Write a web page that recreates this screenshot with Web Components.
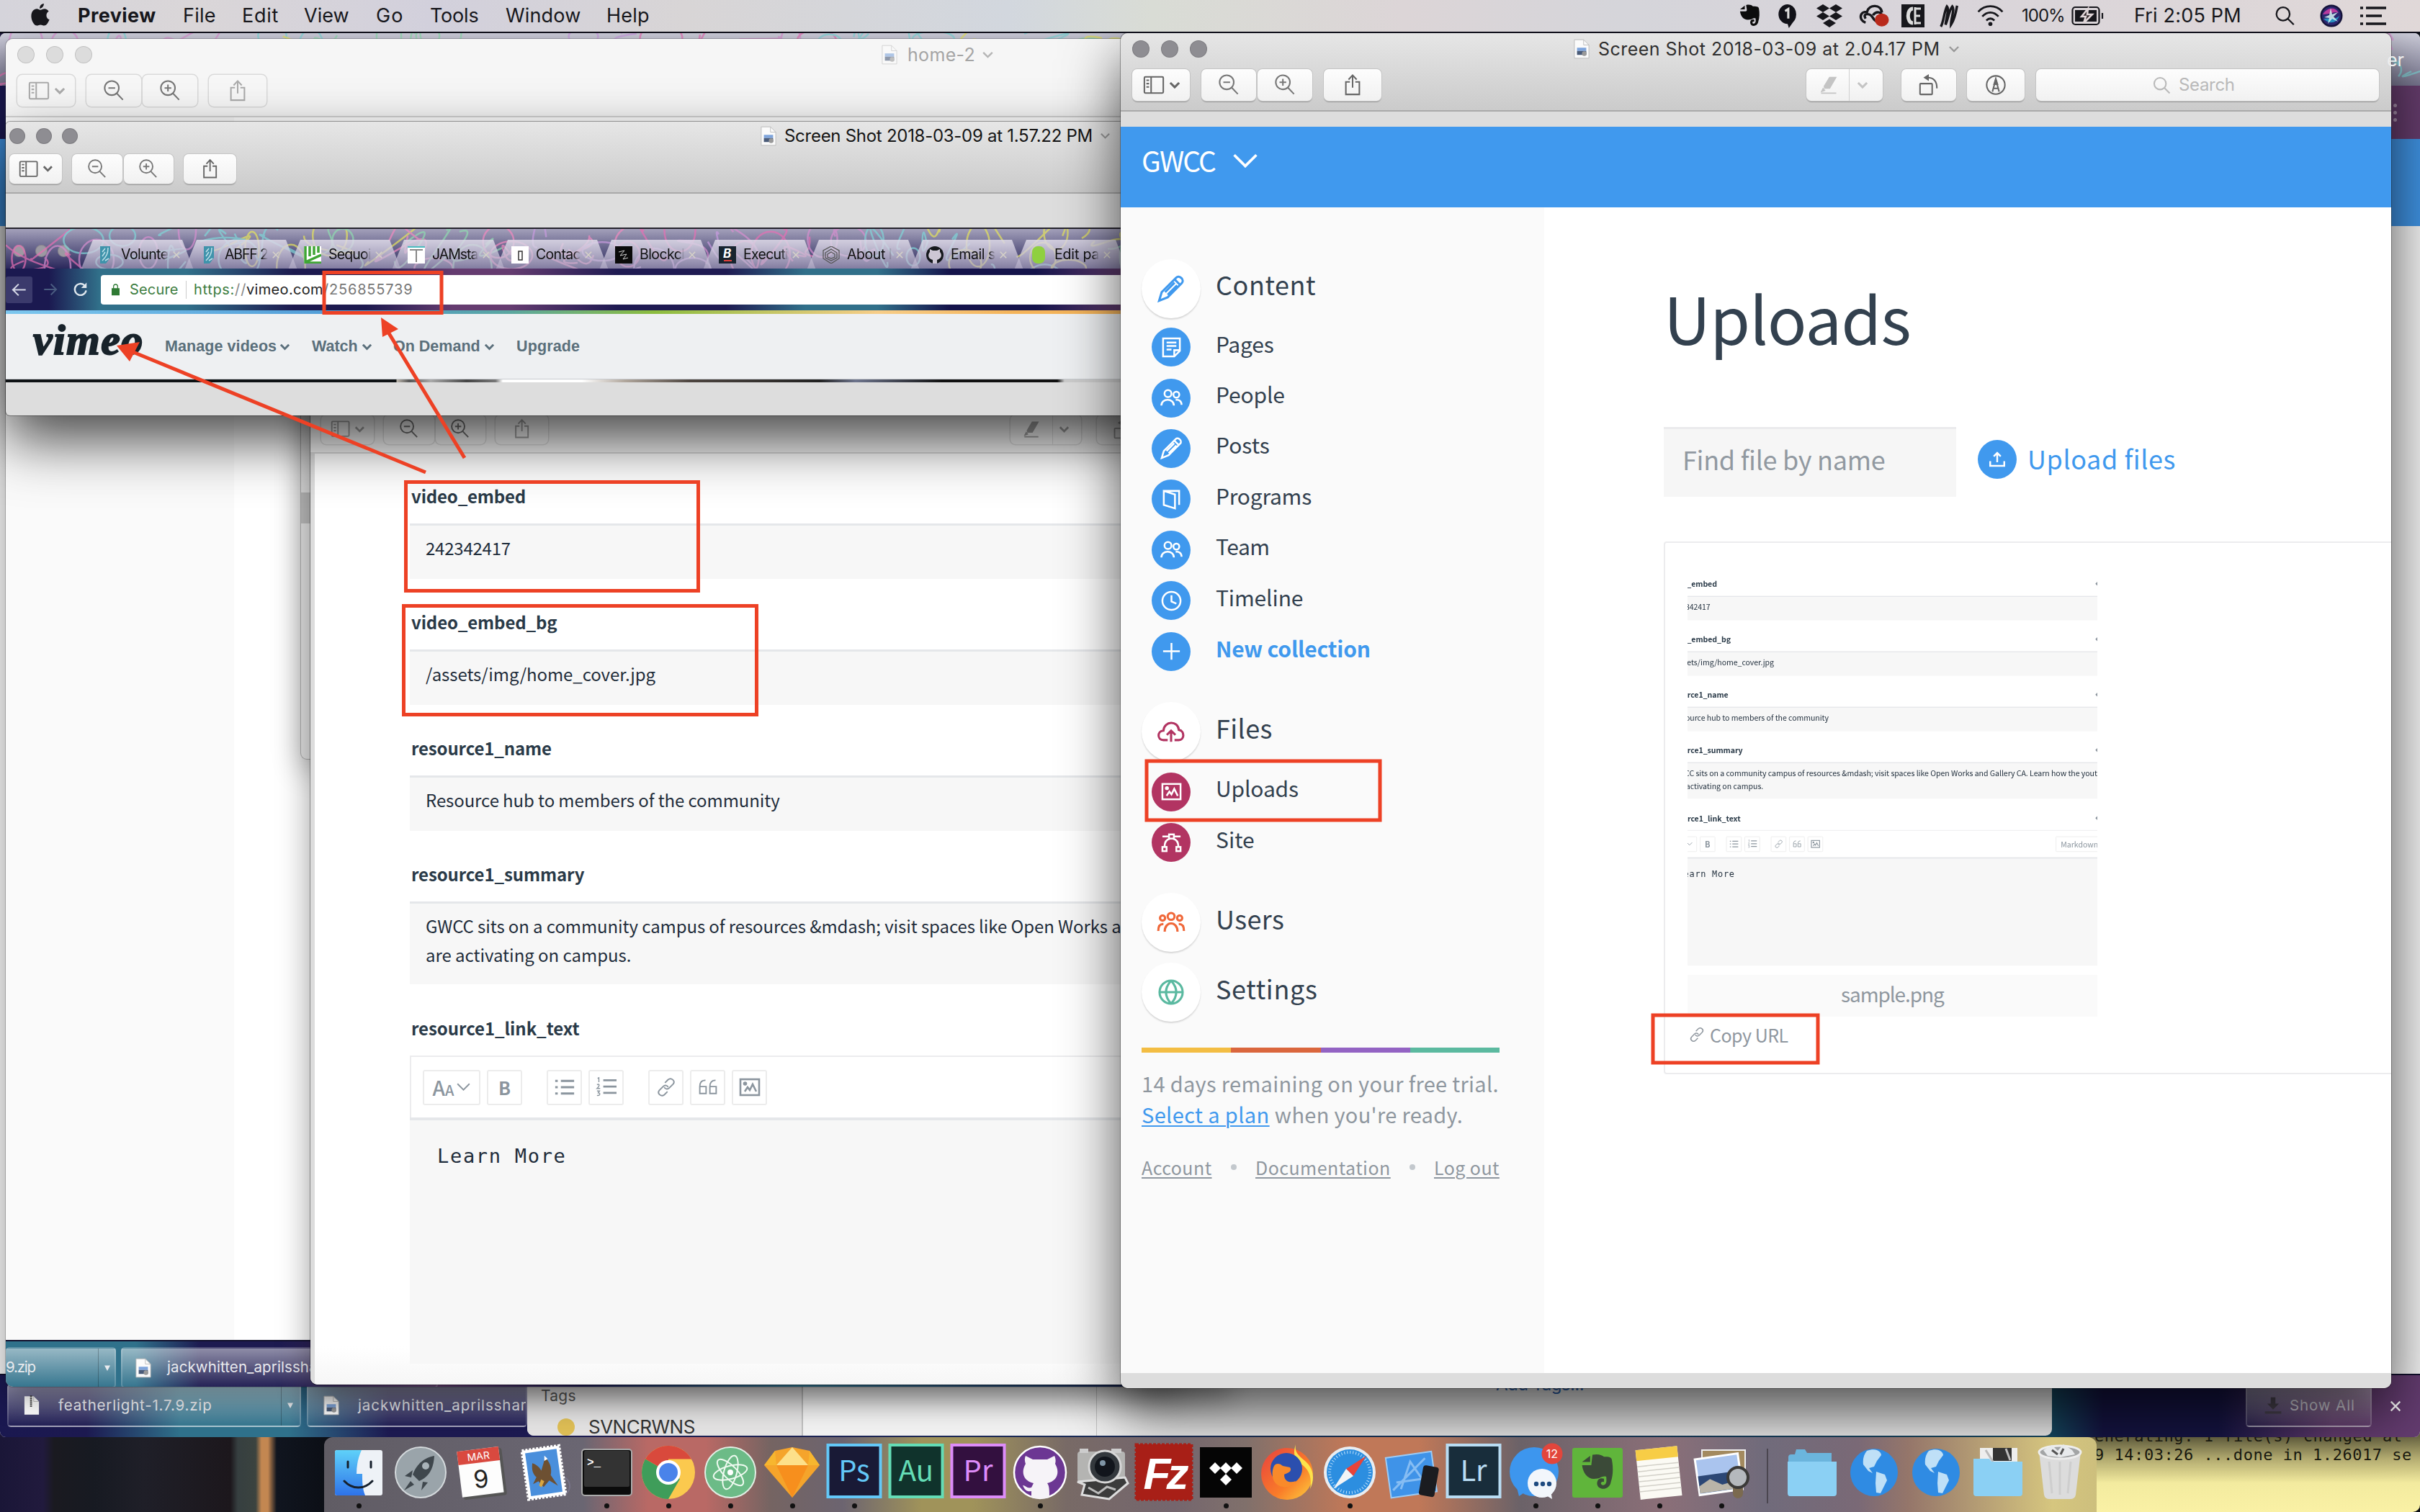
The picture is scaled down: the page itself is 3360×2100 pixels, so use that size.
<!DOCTYPE html>
<html lang="en">
<head>
<meta charset="utf-8">
<title>Desktop</title>
<style>
html,body{margin:0;padding:0;background:#15131c}
body{width:3360px;height:2100px;overflow:hidden;font-family:Inter,"Liberation Sans",sans-serif}
</style>
</head>
<body>
<desk-top></desk-top>
<script>
const ICONS = {
  sidebar:['0 0 32 32','<rect x="2" y="4" width="28" height="24" rx="1.5"/><path d="M12 4v24M5 9h4M5 14h4M5 19h4"/>'],
  chev:['2 1 16 10','<path d="M3 2l7 7 7-7"/>'],
  zoomout:['0 0 32 32','<circle cx="13" cy="12" r="10.500"/><path d="M20.500 20l9 9.500M8 12h10"/>'],
  zoomin:['0 0 32 32','<circle cx="13" cy="12" r="10.500"/><path d="M20.500 20l9 9.500M8 12h10M13 7v10"/>'],
  share:['0 0 32 32','<path d="M12 11.500H6V30h20V11.500h-6M16 20V2M10 8l6-6.500L22 8"/>'],
  marker:['0 0 32 32','<path d="M17 3h12L18 22l-9 0-1-4z" fill="currentColor" stroke="none"/><path d="M7 20l4 5-8 3z" fill="currentColor" stroke="none"/><path d="M4 29h24"/>'],
  rotate:['0 0 32 32','<rect x="3" y="14" width="18" height="16" rx="1"/><path d="M14 5c9 0 14 5 14 16"/><path d="M16 0v10L8 5z" fill="currentColor" stroke="none"/>'],
  pen:['0 0 32 32','<circle cx="16" cy="16" r="13.500"/><path d="M11 26L16 8l5 18M12.500 21h7"/><path d="M16 7l2.500 8h-5z" fill="currentColor"/>'],
  search:['0 0 32 32','<circle cx="13" cy="13" r="10.500"/><path d="M20.500 20.500L30 30"/>'],
  pencil:['0 0 32 32','<path d="M2 30l3-10L22 3c1.500-1.500 4-1.500 6 .5s2 4.500.5 6L12 26 2 30zM20 5l7 7M9 20L20 9M12 23L23 12"/>'],
  page:['0 0 32 32','<path d="M4 3h24v18l-8 8H4zM28 20h-8v9M9 9h14M9 14h14M9 19h7"/>'],
  people:['0 0 32 32','<circle cx="11" cy="10" r="5"/><circle cx="23" cy="11.500" r="4.200"/><path d="M1.500 27c0-11 18-11 18 0M22 19c5-.8 8.500 2 8.500 7"/>'],
  book:['0 0 32 32','<path d="M5 4l16 5v20L5 24zM5 4h22v20"/>'],
  clock:['0 0 32 32','<circle cx="16" cy="16" r="13"/><path d="M16 8v9l7 3"/>'],
  plus:['0 0 32 32','<path d="M16 4v24M4 16h24"/>'],
  cloud:['0 0 32 32','<path d="M12 26H7C-.5 26-.5 15.500 7 15 8 3 24 3 25 14c7 1 7 12 0 12h-5M16 28V15M11 20l5-5 5 5"/>'],
  image:['0 0 32 32','<rect x="3" y="5" width="26" height="22"/><path d="M9 22l4-6 3 4 4-8 5 10"/><circle cx="9.500" cy="11" r="1.500" fill="currentColor"/>'],
  site:['0 0 32 32','<rect x="12.500" y="4" width="7" height="6"/><rect x="3" y="22" width="6" height="6"/><rect x="23" y="22" width="6" height="6"/><path d="M3 7h9M20 7h9M6 22c0-7 3-11 8-12M26 22c0-7-3-11-8-12"/>'],
  users:['0 0 32 32','<circle cx="16" cy="9" r="4"/><circle cx="6" cy="11" r="3"/><circle cx="26" cy="11" r="3"/><path d="M8.500 27c0-13 15-13 15 0M1 26c0-6 2-8 6-8M31 26c0-6-2-8-6-8"/>'],
  globe:['0 0 32 32','<circle cx="16" cy="16" r="13.500"/><path d="M2.500 16h27M16 2.500c-8 9-8 18 0 27M16 2.500c8 9 8 18 0 27"/>'],
  upload:['0 0 32 32','<path d="M16 21V5M10 11l6-6 6 6M4 19v8h24v-8"/>'],
  link:['0 0 32 32','<path d="M14 9l5-5c5-4 12 2 8 7l-6 6c-3 3-7 2-8-1M18 23l-5 5c-5 4-12-2-8-7l6-6c3-3 7-2 8 1"/>'],
  quote:['0 0 32 32','<path d="M12 5C5 5 3 9 3 15v11h10V15H4M28 5c-7 0-9 4-9 10v11h10V15h-9"/>'],
  ul:['0 0 32 32','<path d="M10 6h21M10 16h21M10 26h21M1 6h4M1 16h4M1 26h4"/>'],
  ol:['0 0 32 32','<path d="M11 5h21M11 15h21M11 25h21"/><path stroke-width="1.600" d="M2 2l2-1v7M1 12c4-2 5 1 0 6h5M1 22h4l-2 3c4 0 3 5-2 4"/>'],
  reload:['0 0 32 32','<path d="M27 18a11.500 11.500 0 1 1-3-10"/><path d="M28 2v11H17z" fill="currentColor" stroke="none"/>'],
  back:['0 0 32 32','<path d="M30 16H4M15 4L3 16l12 12"/>'],
  fwd:['0 0 32 32','<path d="M2 16h26M17 4l12 12-12 12"/>'],
  lock:['0 0 32 32','<rect x="4" y="14" width="24" height="17" fill="currentColor"/><path d="M9 14V8c0-8 14-8 14 0v6"/>'],
  x:['0 0 20 20','<path d="M3 3l14 14M17 3L3 17"/>'],
  tri:['0 0 20 20','<path d="M2 3h16l-8 15z" fill="currentColor" stroke="none"/>'],
  download:['0 0 32 32','<path d="M12 2h8v11h6L16 23 6 13h6zM2 26h28v4H2z" fill="currentColor" stroke="none"/>'],
  apple:['0 0 28 34','<path d="M19 1c.3 4-3 7-6 7 0-4 2.500-6.500 6-7zM14 10c2 0 3.500-1.500 6-1.500 2.500 0 4.500 1.500 6 3.500-5 3-4 10 1 12-2 5-4.500 8.500-7.500 8.500-2 0-3-1.200-5.200-1.200S11 32.500 9 32.500C5 32.500 1 25 1 19c0-7 4-10.500 8-10.500 2 0 3.500 1.500 5 1.500z" fill="currentColor" stroke="none"/>'],
  elephant:['0 0 32 36','<path d="M10 1c5-1 8 0 10 2 4 0 9 0 9 4 1 6 1 14-1 20-1 8-11 9-12 2 0-5 3-6 6-5v3c-4-1-3 4 0 3 3-1 2-6 2-8-4-1-5 2-9 2C6 25 2 19 1 11h8c2 0 2-1 2-3z" fill="currentColor" stroke="none"/><path d="M1 8l7-6v6z" fill="currentColor" stroke="none"/>'],
  onep:['0 0 32 36','<path d="M16 1a14 15 0 0 1 8 27l-6 8-2-6A14 14 0 0 1 16 1z" fill="currentColor" stroke="none"/><path d="M12 11l5-3v14" stroke="#ddd" stroke-width="3.500"/>'],
  dropbox:['0 0 36 32','<path d="M9 0l9 5.500-9 5.500L0 5.500zM27 0l9 5.500-9 5.500-9-5.500zM9 11l9 5.500L9 22 0 16.500zM27 11l9 5.500-9 5.500-9-5.500zM18 20.500l9 5.500-9 6-9-6z" fill="currentColor" stroke="none"/>'],
  cc:['0 0 40 36','<path d="M9 28C-1 24 1 11 11 12c3-12 19-11 20 1M9 22c-5-8 6-9 10-1s12 6 12-2-8-8-12-2" stroke-width="3.500"/><circle cx="31" cy="24" r="9.500" fill="#b92a1c" stroke="none"/>'],
  boxc:['0 0 32 32','<path d="M0 0h32v32H0z" fill="currentColor" stroke="none"/><path d="M16 6C7 6 7 26 16 26" stroke="#ddd" stroke-width="5"/><path d="M19 4v24M19 6h8M19 16h7M19 26h8" stroke="#ddd" stroke-width="3"/>'],
  em:['0 0 28 34','<path d="M2 33C6 27 7 10 11 3c4 4-1 16-2 27C13 21 14 9 19 3c4 4-2 16-2 27C21 24 24 14 26 2" stroke-width="3.600"/>'],
  wifi:['0 0 40 32','<path d="M2 10C12-1 28-1 38 10M8 17c7-8 17-8 24 0M14 23c4-4 8-4 12 0"/><circle cx="20" cy="28" r="3" fill="currentColor" stroke="none"/>'],
  battery:['0 0 46 28','<rect x="1.500" y="2" width="37" height="24" rx="4"/><path d="M43 10v8" /><path d="M5 6h30v16H5z" fill="currentColor" stroke="none"/><path d="M23 4L14 15h6l-3 9 12-12h-7z" fill="#2b2224" stroke="#e0d6d8" stroke-width="2.500"/>'],
  list:['0 0 36 32','<path d="M8 5h28M8 16h22M8 27h28M0 5h4M0 16h4M0 27h4" stroke-width="3.600"/>'],
  doc:['0 0 24 30','<path d="M1 1h14l8 8v20H1z" fill="#fbfbfb" stroke="#b9b9b9" stroke-width="1"/><path d="M15 1v8h8" stroke="#bbb" stroke-width="1"/><path d="M5 13h14v5H5z" fill="#7fa5dc" stroke="none"/><path d="M5 18h14v6H5z" fill="#4a5b78" stroke="none"/><circle cx="16" cy="22" r="3.500" fill="#999" stroke="none"/>'],
  zip:['0 0 24 30','<path d="M1 1h14l8 8v20H1z" fill="#fbfbfb" stroke="none"/><path d="M15 1v8h8" stroke="#bbb" stroke-width="1"/><path d="M11 0v17" stroke="#333" stroke-width="3" stroke-dasharray="2 1"/>']
};
const el = (name, html, init) => customElements.define(name, class extends HTMLElement {
  constructor(){ super(); this.attachShadow({mode:'open'}); }
  connectedCallback(){
    if (this.done) return; this.done = true;
    this.shadowRoot.innerHTML = typeof html === 'function' ? html(this) : html;
    if (init) init(this);
  }
});

/* Text set to a given advance width through letter-spacing. */
el('fit-text', `<style>:host{display:block;flex:none;white-space:nowrap;line-height:1.2}span{display:inline-block;white-space:pre;text-decoration:inherit;text-underline-offset:inherit}</style><span><slot></slot></span>`, h => {
  const w = +h.getAttribute('w'); if (!w) return;
  h.style.width = w + 'px';
  const s = h.shadowRoot.querySelector('span'), n = h.textContent.length;
  s.style.letterSpacing = '0px';
  s.style.letterSpacing = ((w - s.offsetWidth) / Math.max(1, n)).toFixed(3) + 'px';
});
el('ui-icon', h => { const [vb, b] = ICONS[h.getAttribute('name')];
  return `<style>:host{display:block;flex:none;width:32px;height:32px}svg{display:block;width:100%;height:100%;fill:none;stroke:currentColor;stroke-width:${h.getAttribute('sw')||2.2};overflow:visible}</style><svg viewBox="${vb}" preserveAspectRatio="${h.hasAttribute('fill')?'none':'xMidYMid meet'}">${b}</svg>`; });

/* Neon line drawing of the browser theme. */
el('neon-art', h => { const w=+h.getAttribute('w'), ht=+h.getAttribute('h'); let s=+(h.getAttribute('seed')||7);
  const r=()=>(s=(s*16807)%2147483647)/2147483647;
  const cols=['#e76fb4','#d88fd0','#7fd6d8','#e6e45c','#8fdcb0','#f28ac0','#c99be0'];
  let p='';
  for(let x=0;x<w;x+=18){const c=cols[Math.floor(x/150+r()*1.600)%cols.length];const y=r()*ht;
    p+=r()<.3?`<ellipse cx="${x}" cy="${y}" rx="${8+r()*22}" ry="${8+r()*24}" stroke="${c}"/>`
      :`<path d="M${x} ${y}q${r()*60-30} ${r()*50-25} ${r()*90-30} ${r()*70-35}t${r()*50-20} ${r()*50-25}" stroke="${c}"/>`;}
  return `<style>:host{display:block;width:${w}px;height:${ht}px;overflow:hidden;opacity:.7}svg{display:block;fill:none;stroke-width:2.500}</style><svg width="${w}" height="${ht}">${p}</svg>`; });

el('traffic-lights', `<style>:host{display:flex;flex:none;gap:var(--lg,16px)}i{width:var(--ls,24px);height:var(--ls,24px);border-radius:50%;background:var(--lc,#8e8d92);box-shadow:inset 0 0 0 1px rgba(0,0,0,.12)}</style><i></i><i></i><i></i>`);
el('tool-button', `<style>:host{display:flex;box-sizing:border-box;flex:none;align-items:center;justify-content:center;gap:7px;height:var(--bh,44px);border-radius:7px;background:var(--bb,linear-gradient(#fdfdfd,#f1f1f1));box-shadow:var(--bs,0 0 0 1px #c4c4c4,0 1.500px 1px #9a9a9a);color:var(--bc,#666)}</style><slot></slot>`);
el('left-tools', `<style>:host{display:flex;flex:none;--k:var(--scale,1)}
tool-button{width:calc(76px*var(--k))}tool-button.e{width:calc(80px*var(--k))}
ui-icon{width:calc(30px*var(--k));height:calc(30px*var(--k))}ui-icon.c{width:calc(14px*var(--k));height:9px}.z{color:var(--zc,#777)}</style>
<tool-button class="e"><ui-icon name="sidebar"></ui-icon><ui-icon class="c" name="chev" sw="3.500"></ui-icon></tool-button>
<tool-button class="z" style="margin-left:calc(16px*var(--k))"><ui-icon name="zoomout"></ui-icon></tool-button>
<tool-button class="z" style="margin-left:2px"><ui-icon name="zoomin"></ui-icon></tool-button>
<tool-button class="e" style="margin-left:calc(16px*var(--k))"><ui-icon name="share" style="height:calc(32px*var(--k))"></ui-icon></tool-button>`);

el('mac-window', `<style>:host{display:flex;flex-direction:column;position:absolute;box-sizing:border-box;overflow:hidden;border-radius:10px;background:#ddd}
header{flex:none;height:var(--hh,109px);box-sizing:border-box;background:var(--hb,linear-gradient(#e6e6e6,#cbcbcb));border-bottom:2px solid var(--hl,#a9a9a9);display:flex;flex-direction:column}
.t{display:flex;align-items:center;flex:none;height:var(--th,44px);padding-left:var(--tp,16px)}
.b{display:flex;align-items:center;flex:none;height:var(--bt,56px);padding-left:var(--tp,16px)}
main{flex:1;min-height:0;display:flex;flex-direction:column}</style>
<header><div class="t"><traffic-lights></traffic-lights><slot name="title"></slot></div><div class="b"><left-tools></left-tools><slot name="tools"></slot></div></header><main><slot></slot></main>`);

/* Editable metadata form */
const S='"Noto Sans CJK SC","Source Sans Pro","Open Sans",sans-serif';
el('form-field', h=>`<style>:host{display:block;margin-bottom:38px;font:24px ${S};color:#2a3a48}
.l{display:flex;height:42px;align-items:center;font-weight:700;margin-bottom:18px;padding-left:2px;justify-content:flex-start}
.l>div{width:1355px;padding-top:2px}.l i{width:9px;height:9px;background:#8a939c;transform:rotate(45deg);flex:none}
.v{box-sizing:border-box;border-top:3px solid #e5e7ea;background:#f7f7f7;min-height:77px;padding:11px 22px 0;color:#1f2d3b;height:${h.getAttribute('h')||77}px}
::slotted(fit-text){line-height:40px}</style>
<div class="l"><div><fit-text w="${h.getAttribute('lw')}">${h.getAttribute('label')}</fit-text></div><i></i></div><div class="v"><slot></slot></div>`);
el('site-form', `<style>:host{display:block;box-sizing:border-box;padding-top:37px;background:#fff;font-family:${S}}
.l{height:42px;display:flex;align-items:center;font:700 24px ${S};color:#2a3a48;padding-left:2px;margin-top:40px;margin-bottom:17px}.l>div{width:1355px}.l i{width:9px;height:9px;background:#8a939c;transform:rotate(45deg)}
.bar{height:86px;box-sizing:border-box;border:2px solid #ececee;border-bottom:none;display:flex;align-items:center;padding-left:16px;color:#8b959e}
.bar div{box-sizing:border-box;width:49px;height:49px;border:2px solid #ececec;border-radius:3px;display:flex;align-items:center;justify-content:center;flex:none;margin-right:9px;font:700 25px ${S}}
.bar ui-icon{width:28px;height:28px}
.a{box-sizing:border-box;height:342px;border-top:4px solid #e5e7ea;background:#f7f7f7;padding:34px 38px;color:#1f2d3b;font:27px "DejaVu Sans Mono","Liberation Mono",monospace}
.md{font-weight:400!important;width:150px!important;margin-left:725px;font-size:24px!important}</style>
<form-field label="video_embed" lw="159"><fit-text w="118">242342417</fit-text></form-field>
<form-field label="video_embed_bg" lw="202"><fit-text w="319">/assets/img/home_cover.jpg</fit-text></form-field>
<form-field label="resource1_name" lw="195"><fit-text w="492">Resource hub to members of the community</fit-text></form-field>
<form-field label="resource1_summary" lw="240" h="115"><fit-text w="1339">GWCC sits on a community campus of resources &amp;mdash; visit spaces like Open Works and Gallery CA. Learn how the yout</fit-text><fit-text w="285">are activating on campus.</fit-text></form-field>
<div class="l"><div><fit-text w="234">resource1_link_text</fit-text></div><i></i></div>
<div class="bar"><div style="width:80px;font-weight:500;gap:0"><span style="font-size:28px">A</span><span style="font-size:20px;padding-top:6px">A</span><ui-icon name="chev" sw="1.600" style="width:19px;height:12px;margin-left:4px"></ui-icon></div><div>B</div>
<div style="margin-left:25px"><ui-icon name="ul" sw="3.200"></ui-icon></div><div><ui-icon name="ol" sw="3.200"></ui-icon></div>
<div style="margin-left:25px"><ui-icon name="link"></ui-icon></div><div><ui-icon name="quote"></ui-icon></div><div><ui-icon name="image" sw="2.600" style="width:32px;height:32px"></ui-icon></div><div class="md">Markdown</div></div>
<div class="a"><fit-text w="180">Learn More</fit-text></div>`);

el('nav-item', h=>{const b=h.hasAttribute('big'),c=h.getAttribute('color'),d=b?82:54,r=b?36:30;
 return `<style>:host{display:flex;align-items:center;height:${b?97:70.4}px;padding-left:${b?29:43}px}
i{flex:none;width:${d}px;height:${d}px;border-radius:50%;display:flex;align-items:center;justify-content:center;${b?`background:#fff;box-shadow:0 2px 2px rgba(0,0,0,.14);color:${c}`:`background:${c};color:#fff`}}
ui-icon{width:${b?38:31}px;height:${b?38:31}px}
fit-text{margin-left:${b?21:35}px;margin-bottom:${h.hasAttribute('bold')?9:11}px;font:${h.hasAttribute('bold')?700:400} ${r}px ${S};color:${h.hasAttribute('bold')?c:'#33414f'};line-height:1.2}</style>
<i><ui-icon name="${h.getAttribute('icon')}" sw="2.600"></ui-icon></i><fit-text w="${h.getAttribute('w')}">${h.getAttribute('label')}</fit-text>`;});
el('side-nav', `<style>:host{display:block;flex:none;width:588px;background:#fafafa;padding-top:64px;box-sizing:border-box;font-family:${S}}
.c{display:flex;margin:28px 0 0 29px;width:497px;height:7px}.c i{flex:1}
.p{margin:21px 0 0 29px;color:#8f979f;font:29px ${S}}.p fit-text{line-height:43px}
.r{display:flex}
.f{display:flex;align-items:center;width:497px;justify-content:space-between;margin:37px 0 0 29px;font:25px ${S};color:#8f979f}.f i{width:8px;height:8px;border-radius:50%;background:#c3c8cd}
fit-text.u{text-decoration:underline;text-decoration-thickness:2px;text-underline-offset:3px}</style>
<nav-item big icon="pencil" color="#4099ee" label="Content" w="139"></nav-item>
<div style="margin-top:-2px"></div>
<nav-item icon="page" color="#4099ee" label="Pages" w="81"></nav-item>
<nav-item icon="people" color="#4099ee" label="People" w="96"></nav-item>
<nav-item icon="pencil" color="#4099ee" label="Posts" w="75"></nav-item>
<nav-item icon="book" color="#4099ee" label="Programs" w="133"></nav-item>
<nav-item icon="people" color="#4099ee" label="Team" w="75"></nav-item>
<nav-item icon="clock" color="#4099ee" label="Timeline" w="121"></nav-item>
<nav-item icon="plus" color="#4099ee" bold label="New collection" w="215"></nav-item>
<div style="height:28px"></div>
<nav-item big icon="cloud" color="#b23462" label="Files" w="79"></nav-item>
<nav-item icon="image" color="#b23462" label="Uploads" w="115"></nav-item>
<nav-item icon="site" color="#b23462" label="Site" w="54"></nav-item>
<div style="height:27px"></div>
<nav-item big icon="users" color="#f0683a" label="Users" w="95"></nav-item>
<nav-item big icon="globe" color="#5ab9a0" label="Settings" w="141"></nav-item>
<div class="c"><i style="background:#f3bd43"></i><i style="background:#da663d"></i><i style="background:#9363c3"></i><i style="background:#5bb99f"></i></div>
<div class="p"><fit-text w="496">14 days remaining on your free trial.</fit-text><div class="r"><fit-text class="u" w="178" style="color:#4099ee">Select a plan</fit-text><fit-text w="268"> when you're ready.</fit-text></div></div>
<div class="f"><fit-text class="u" w="98">Account</fit-text><i></i><fit-text class="u" w="188">Documentation</fit-text><i></i><fit-text class="u" w="91">Log out</fit-text></div>`);

el('uploads-page', `<style>:host{display:block;flex:1;background:#fff;padding-left:166px;font-family:${S};overflow:hidden}
.h{font:90px ${S};color:#33414f;margin-top:98px;height:108px;line-height:108px}
.h fit-text{line-height:108px}
.s{display:flex;align-items:center;height:97px;margin-top:99px;font:36px ${S}}
.s div{width:406px;height:97px;box-sizing:border-box;border-top:3px solid #ebebed;background:#f6f6f6;display:flex;align-items:center;padding-left:26px;color:#9199a1;padding-bottom:10px}
.s i{width:54px;height:54px;border-radius:50%;background:#4099ee;color:#fff;display:flex;align-items:center;justify-content:center;margin:0 15px 8px 30px}
.card{box-sizing:border-box;height:740px;margin-top:62px;border:2px solid #ececee;border-right:none;border-radius:4px 0 0 4px;padding:31px 0 0 31px}
.th{width:569px;height:558px;overflow:hidden}
.th site-form{width:1900px;transform-origin:0 0;transform:scale(.44);margin-left:-30px}
.cap{width:569px;height:58px;margin-top:11px;background:#fafafa;display:flex;align-items:center;justify-content:center;font:28px ${S};color:#8f979f;box-sizing:border-box;padding-bottom:4px}
.cp{display:flex;align-items:center;gap:7px;height:40px;margin:5px 0 0 2px;color:#8f979f;font:25px ${S}}</style>
<div class="h"><fit-text w="343">Uploads</fit-text></div>
<div class="s"><div><fit-text w="281">Find file by name</fit-text></div><i><ui-icon name="upload" style="width:26px;height:26px" sw="3"></ui-icon></i><fit-text w="206" style="color:#4099ee;margin-bottom:10px">Upload files</fit-text></div>
<div class="card"><div class="th"><site-form></site-form></div><div class="cap"><fit-text w="143">sample.png</fit-text></div>
<div class="cp"><ui-icon name="link" style="width:22px;height:22px"></ui-icon><fit-text w="109">Copy URL</fit-text></div></div>`);

el('front-window', `<style>:host{display:block}
mac-window{left:1556px;top:46px;width:1764px;height:1882px;box-shadow:0 0 0 1px rgba(0,0,0,.3),0 34px 80px rgba(0,0,0,.68)}
.ti{display:flex;align-items:center;gap:12px;margin-left:509px;font-size:25px;color:#2f2f2f}
.to{display:flex;align-items:center;flex:1}
.bl{flex:none;height:112px;margin-top:21px;background:#4099ee;display:flex;align-items:center;padding-left:29px;box-sizing:border-box;padding-bottom:20px;color:#fff;font:400 39px ${S}}
.r{flex:1;display:flex;min-height:0}.ft{height:21px;background:#ddd;flex:none}</style>
<mac-window><div class="ti" slot="title"><ui-icon name="doc" style="width:22px;height:28px"></ui-icon><fit-text w="475">Screen Shot 2018-03-09 at 2.04.17 PM</fit-text><ui-icon name="chev" style="width:14px;height:9px;color:#999" sw="2.600"></ui-icon></div>
<div class="to" slot="tools">
<tool-button style="width:106px;margin-left:590px;color:#c4c4c4;justify-content:flex-start"><ui-icon name="marker" style="width:30px;height:28px;margin:0 9px 0 16px"></ui-icon><i style="width:1px;height:44px;background:#d0d0d0;margin-left:-3px"></i><ui-icon name="chev" style="width:14px;height:9px;margin-left:4px" sw="3.500"></ui-icon></tool-button>
<tool-button style="width:76px;margin-left:26px"><ui-icon name="rotate" style="width:30px;height:30px"></ui-icon></tool-button>
<tool-button style="width:80px;margin-left:15px"><ui-icon name="pen" style="width:30px;height:30px"></ui-icon></tool-button>
<tool-button style="width:476px;margin-left:16px;color:#b9b9b9;gap:11px;font-size:24px;padding-right:38px"><ui-icon name="search" style="width:25px;height:25px" sw="2.600"></ui-icon><fit-text w="78">Search</fit-text></tool-button></div>
<div class="bl"><fit-text w="102">GWCC</fit-text><ui-icon name="chev" style="width:36px;height:22px;margin:3px 0 0 24px" sw="1.700"></ui-icon></div>
<div class="r"><side-nav></side-nav><uploads-page></uploads-page></div><div class="ft"></div></mac-window>`);

el('chrome-tab', h=>`<style>:host{display:block;flex:none;width:150px;height:42px;margin-right:-6px}
div{width:157px;height:42px;clip-path:polygon(17px 0,141px 0,157px 42px,0 42px);background:linear-gradient(rgba(222,218,232,.86),rgba(178,170,198,.62));display:flex;align-items:center;box-sizing:border-box;padding-left:22px}
i{width:24px;height:24px;flex:none;display:block}i ::slotted(*){display:block}
fit-text{font-size:19.500px;color:#111;margin-left:10px;-webkit-mask:linear-gradient(90deg,#000 85%,transparent)}
ui-icon{width:12px;height:12px;color:#d6d2c8;margin-left:5px}</style>
<div><i><slot></slot></i><fit-text w="${h.getAttribute('w')||62}">${h.getAttribute('t')}</fit-text><ui-icon name="x" sw="2.500"></ui-icon></div>`);
const fav=s=>`<svg width="24" height="24" viewBox="0 0 24 24">${s}</svg>`;
const leaf='<path d="M5 0h14v16l-6 8H5z" fill="#3f93ab"/><path d="M8 20c6-6 8-10 8-18M8 14l4-6M8 8l4-5M12 20l5-3" stroke="#bfe0ea" fill="none" stroke-width="1.500"/>';
el('vimeo-shot', `<style>:host{display:block}
mac-window{left:8px;top:169px;width:1700px;height:408px;border-radius:6px;box-shadow:0 0 0 1px rgba(0,0,0,.35),0 34px 80px rgba(0,0,0,.72);--hh:100px;--th:40px;--bt:51px;--tp:5px;--ls:22px;--lg:14.500px;--bh:41px;--scale:.91}
.ti{display:flex;align-items:center;gap:11px;margin-left:948px;font-size:24px;color:#151515}
.strip{flex:none;height:57px;margin-top:47px;border-top:2px solid #26242e;box-sizing:border-box;background:linear-gradient(#a3a0ba,#6a678e 45%,#2b285c);display:grid;overflow:hidden}
.strip>*{grid-area:1/1}
.tabs{display:flex;align-items:flex-end;--lc:#9c99a2;--ls:17px;--lg:14px}
.bar{flex:none;height:58px;display:flex;align-items:center;box-sizing:border-box;background:linear-gradient(90deg,#1b1950 0,#1b1950 60px,#31708a 130px,#31708a 250px,#1d1a4f 400px,#1d1a4f 500px,#653c70 620px,#653c70 700px,#1f1b52 850px,#1f1b52 1000px,#31708a 1110px,#31708a 1210px,#15144b 1310px,#15144b 1430px,#5f3a6b 1550px)}
.bk{width:37px;height:37px;background:#3b3a6c;border-radius:3px;display:flex;align-items:center;justify-content:center;color:#d5d8e6}
.url{height:41px;flex:1;background:#fff;border-radius:4px 0 0 4px;margin-left:17px;display:flex;align-items:center;padding-left:14px;font-size:20px}
.rb{height:5px;flex:none;background:linear-gradient(90deg,#7cc7ee,#4f9bd6 480px,#5aa7a0 700px,#8cbd3f 900px,#f7cd88 1210px,#f4b45a 1400px)}
.nav{flex:none;height:91px;background:#eef0f2;display:flex;align-items:center;color:#5a6f7b;font:700 21.500px "Liberation Sans",sans-serif;border-bottom:1px solid #c8ccd0;box-sizing:border-box;padding-top:2px}
.nav ui-icon{width:13px;height:8px}
.nav .lg{font:italic 700 60px/60px "Liberation Serif",serif;color:#18232b;-webkit-text-stroke:2px #18232b;margin:-20px 0 0 38px}
.ln{height:4px;flex:none;background:linear-gradient(90deg,#0e1214 542px,#bbb5ac 543px,#555 560px,#aaa 590px,#444 640px,#777 680px,#fff 690px,#fff 800px,#b0a69c 860px,#4d4540 950px,#222 1130px,#6d748c 1180px,#111 1300px,#111 1460px,#ccc 1470px)}</style>
<mac-window><div class="ti" slot="title"><ui-icon name="doc" style="width:22px;height:28px"></ui-icon><fit-text w="428">Screen Shot 2018-03-09 at 1.57.22 PM</fit-text><ui-icon name="chev" style="width:13px;height:8px;color:#999" sw="2.600"></ui-icon></div>
<div class="strip"><neon-art w="1700" h="57" seed="41"></neon-art><div class="tabs"><traffic-lights style="margin:0 6px 18px 10px"></traffic-lights>
<div style="display:flex;margin-left:9px">
<chrome-tab t="Volunte" w="66">${fav(leaf)}</chrome-tab><chrome-tab t="ABFF 2" w="60">${fav(leaf)}</chrome-tab>
<chrome-tab t="Sequoi" w="59">${fav('<path d="M0 0h24v24H0z" fill="#fff"/><path d="M2 0v22L24 12M8 0v14M14 0v12M20 0v9M2 23h22" stroke="#3fa535" stroke-width="3.500" fill="none"/>')}</chrome-tab>
<chrome-tab t="JAMsta" w="64">${fav('<path d="M0 0h24v24H0z" fill="#fff"/><path d="M0 0h24v2H0z" fill="#4bbcc0"/><path d="M3 5h18M12 5v17" stroke="#888" stroke-width="2"/>')}</chrome-tab>
<chrome-tab t="Contac">${fav('<path d="M0 0h24v24H0z" fill="#fff"/><rect x="10" y="7" width="5" height="12" fill="none" stroke="#333" stroke-width="1.500"/>')}</chrome-tab>
<chrome-tab t="Blockcl">${fav('<path d="M0 0h24v24H0z" fill="#0a0a0a"/><path d="M5 8l8-2-6 7 9-2-5 7 7-2" stroke="#ccc" fill="none"/>')}</chrome-tab>
<chrome-tab t="Executi">${fav('<path d="M0 0h24v24H0z" fill="#17242f"/><text x="6" y="16" font-size="17" font-weight="700" font-family="Inter" fill="#fff">B</text><path d="M7 19h11v2H7z" fill="#e0403a"/>')}</chrome-tab>
<chrome-tab t="About l">${fav('<path d="M12 0l11 6v11l-11 7-11-7V6zM12 4l8 5v7l-8 4-8-4V9zM12 8l5 3v4l-5 2-5-2v-4z" fill="none" stroke="#555" stroke-width="1.300"/>')}</chrome-tab>
<chrome-tab t="Email s">${fav('<circle cx="12" cy="12" r="12" fill="#15181c"/><path d="M9 24v-5c-8-2-6-9-4-11l0-4 4 2h6l4-2 0 4c3 3 3 9-4 11v5z" fill="#cdc6d4"/>')}</chrome-tab>
<chrome-tab t="Edit pa">${fav('<rect x="3" y="0" width="18" height="24" rx="8" fill="#8fd03f"/>')}</chrome-tab></div></div></div>
<div class="bar"><div class="bk"><ui-icon name="back" style="width:21px;height:21px" sw="3.200"></ui-icon></div><ui-icon name="fwd" style="width:20px;height:20px;margin-left:15px;color:#4a5c80" sw="3"></ui-icon><ui-icon name="reload" style="width:22px;height:22px;margin-left:21px;color:#dfe7ee" sw="3.500"></ui-icon>
<div class="url"><ui-icon name="lock" style="width:13px;height:16px;color:#2f7a34" fill sw="3"></ui-icon><fit-text w="68" style="color:#3d7d3f;margin-left:13px">Secure</fit-text><i style="width:1px;height:25px;background:#ccc;margin:0 10px"></i><fit-text w="57" style="color:#3d7d3f">https:</fit-text><fit-text w="16" style="color:#888">//</fit-text><fit-text w="107" style="color:#222">vimeo.com</fit-text><fit-text w="124" style="color:#777">/256855739</fit-text></div></div>
<div class="rb"></div>
<div class="nav"><fit-text class="lg" w="154">vimeo</fit-text><fit-text w="155" style="margin-left:29px">Manage videos</fit-text><ui-icon name="chev" sw="3.600" style="margin-left:5px"></ui-icon><fit-text w="64" style="margin-left:31px">Watch</fit-text><ui-icon name="chev" sw="3.600" style="margin-left:6px"></ui-icon><fit-text w="121" style="margin-left:30px">On Demand</fit-text><ui-icon name="chev" sw="3.600" style="margin-left:6px"></ui-icon><fit-text w="88" style="margin-left:31px">Upgrade</fit-text></div>
<div class="ln"></div></mac-window>`);

el('form-window', `<style>:host{display:block}
mac-window{left:431px;top:520px;width:1200px;height:1403px;background:#fff;box-shadow:0 0 0 1px rgba(0,0,0,.35),0 14px 46px rgba(0,0,0,.4);--hb:#f6f6f6;--hl:#d8d8d8;--hh:110px;--th:53px;--bt:46px;--tp:15px;--bh:41px;--scale:.91;--bb:#f7f7f7;--bs:0 0 0 1.500px #dcdcdc;--bc:#a2a2a2;--lc:#ddd;--zc:#707070}
.to{display:flex;margin-left:642px}
.b{flex:1;border-left:6px solid #dcdcdc;padding-left:132px;background:linear-gradient(#fff 1240px,#f6f6f6);overflow:hidden}
site-form{width:1900px}</style>
<mac-window><div class="to" slot="tools"><tool-button style="width:98px;justify-content:flex-start"><ui-icon name="marker" style="width:28px;height:26px;margin-left:15px"></ui-icon><i style="width:1px;height:41px;background:#ddd;margin-left:8px"></i><ui-icon name="chev" style="width:13px;height:9px;margin-left:2px" sw="3.500"></ui-icon></tool-button><tool-button style="width:70px;margin-left:22px"><ui-icon name="rotate" style="width:27px;height:27px"></ui-icon></tool-button></div>
<div class="b"><site-form></site-form></div></mac-window>`);

el('dl-item', `<style>:host{display:flex;flex:none;box-sizing:border-box;align-items:center;border:2px solid rgba(255,255,255,.18);border-radius:5px;background:linear-gradient(rgba(255,255,255,.5),rgba(255,255,255,.04));color:#e8eaee;overflow:hidden;font-size:20.500px;height:57px}</style><slot></slot>`);
el('home-window', `<style>:host{display:block}
mac-window{left:8px;top:54px;width:1700px;height:1872px;box-shadow:0 0 0 1px rgba(0,0,0,.2),0 14px 40px rgba(0,0,0,.35);--hb:#f6f6f6;--hl:#d2d2d2;--lc:#dcdcdc;--bb:#f7f7f7;--bs:0 0 0 1.500px #dadada;--bc:#ababab;--zc:#777;--hh:109px;--th:44px;--bt:56px}
.ti{display:flex;align-items:center;gap:14px;margin-left:1096px;font-size:25px;color:#a5a5a5}
.pg{flex:1;display:flex}.s{width:317px;background:#fafafa}.m{flex:1;background:#fff}
.d{height:65px;flex:none;box-sizing:border-box;border-top:2px solid #11102c;padding-top:8px;display:flex;gap:7px;background:linear-gradient(90deg,#2f718b 0,#2f718b 180px,#1d1a50 270px,#1d1a50 380px,#613c70 600px,#1d1a50 800px,#2f718b 1100px,#15144b)}</style>
<mac-window><div class="ti" slot="title"><ui-icon name="doc" style="width:22px;height:30px;opacity:.6"></ui-icon><fit-text w="94">home-2</fit-text><ui-icon name="chev" style="width:15px;height:9px;color:#b5b5b5;margin-left:-4px" sw="2.600"></ui-icon></div>
<div class="pg"><div class="s"></div><div class="m"></div></div>
<div class="d"><dl-item style="width:153px;border-left:none"><fit-text w="41">9.zip</fit-text><i style="width:1px;height:57px;background:rgba(0,0,0,.25);margin-left:87px"></i><ui-icon name="tri" style="width:10px;height:10px;margin-left:7px"></ui-icon></dl-item>
<dl-item style="width:440px"><ui-icon name="doc" style="width:22px;height:28px;margin-left:18px"></ui-icon><fit-text w="216" style="margin-left:22px">jackwhitten_aprilsshar</fit-text></dl-item></div></mac-window>`);

el('browser-back', `<style>:host{display:flex;flex-direction:column;position:absolute;left:0;top:46px;width:3360px;height:1950px;border-radius:8px;overflow:hidden;background:#ececec}
.s{height:73px;flex:none;background:linear-gradient(#cfcfdc,#77758f);display:grid;justify-items:end}.s>*{grid-area:1/1}
.s span{color:#eee;font-size:25px;align-self:center;z-index:1;padding-right:22px}
.t{height:74px;flex:none;background:linear-gradient(90deg,#1a1850 40%,#653c6c 90%);display:flex;justify-content:flex-end;align-items:center}
.t div{display:flex;flex-direction:column;gap:5px;padding-right:32px}.t i{width:5px;height:5px;border-radius:50%;background:#a890ac}
.b{height:121px;flex:none;background:#3f92e2}.p{flex:1;background:#f3f3f3}
.d{height:88px;flex:none;box-sizing:border-box;border-top:2px solid #11102c;display:flex;align-items:flex-start;padding:12px 0 0 10px;gap:8px;background:linear-gradient(90deg,#1a1850 0,#1c1950 120px,#2f718b 250px,#2f718b 400px,#1c1950 540px,#1c1950 700px,#15475f 2850px,#151443 2920px,#151443 3080px,#643c70 3240px,#643c70)}
dl-item{height:60px}</style>
<div class="s"><neon-art w="3360" h="73" seed="91"></neon-art><span>er</span></div><div class="t"><div><i></i><i></i><i></i></div></div><div class="b"></div><div class="p"></div>
<div class="d"><dl-item style="width:408px"><ui-icon name="zip" style="width:22px;height:30px;margin-left:21px"></ui-icon><fit-text w="214" style="margin-left:26px">featherlight-1.7.9.zip</fit-text><i style="width:1px;height:57px;background:rgba(0,0,0,.25);margin-left:95px"></i><ui-icon name="tri" style="width:10px;height:10px;margin-left:7px"></ui-icon></dl-item>
<dl-item style="width:306px"><ui-icon name="doc" style="width:22px;height:30px;margin-left:21px"></ui-icon><fit-text w="234" style="margin-left:26px">jackwhitten_aprilsshar</fit-text></dl-item>
<dl-item style="width:175px;margin-left:2378px;color:#dad8e0"><ui-icon name="download" style="width:28px;height:26px;color:#4a4450;margin-left:22px"></ui-icon><fit-text w="91" style="margin-left:9px">Show All</fit-text></dl-item><ui-icon name="x" style="width:18px;height:18px;color:#fff;margin:22px 0 0 16px" sw="2.600"></ui-icon></div>`);

el('finder-window', `<style>:host{display:flex;position:absolute;left:732px;top:1500px;width:2117px;height:494px;border-radius:9px;overflow:hidden;background:#f0f0f0;box-sizing:border-box}
.s{width:383px;background:#e2e1e1;border-right:2px solid #bdbdbd;box-sizing:border-box;display:flex;flex-direction:column;justify-content:flex-end;color:#555}
.c{width:408px;border-right:1px solid #c4c4c4;box-sizing:border-box}.s div{display:flex;align-items:center}
.a{flex:1;display:flex;align-items:flex-end;padding:0 0 56px 554px;color:#2e63ae;font-size:24px}</style>
<div class="s"><div style="padding-left:19px;font-size:21px"><fit-text w="49">Tags</fit-text></div><div style="height:24px;margin:19px 0 0 42px;gap:19px;font-size:26px;color:#333"><i style="width:24px;height:24px;border-radius:50%;background:#ddbd55"></i><fit-text w="148">SVNCRWNS</fit-text></div></div>
<div class="c"></div><div class="a"><fit-text w="122">Add Tags...</fit-text></div>`);

el('menu-bar', `<style>:host{display:flex;align-items:center;position:relative;z-index:3;box-sizing:border-box;width:3360px;height:46px;border-bottom:2px solid #0d0d18;background:linear-gradient(90deg,#d5d4db,#dad6d8 270px,#d2d0dc 600px,#d8d5d6 950px,#d2d7de 1400px,#d9dcd5 1600px,#dcd5d7 1950px,#d5d5da 2250px,#d8d4da 2600px,#e0d8d8);padding-left:42px;font-size:27px;color:#17171c}</style>
<ui-icon name="apple" style="width:28px;height:33px;margin-top:-4px"></ui-icon><fit-text w="109" style="font-weight:700;margin-left:38px">Preview</fit-text><fit-text w="46" style="margin-left:37px">File</fit-text><fit-text w="51" style="margin-left:36px">Edit</fit-text><fit-text w="63" style="margin-left:35px">View</fit-text><fit-text w="38" style="margin-left:37px">Go</fit-text><fit-text w="68" style="margin-left:37px">Tools</fit-text><fit-text w="104" style="margin-left:37px">Window</fit-text><fit-text w="60" style="margin-left:36px">Help</fit-text>
<ui-icon name="elephant" style="width:30px;height:32px;margin-left:1513px;color:#0c0c0c" fill></ui-icon><ui-icon name="onep" fill style="width:28px;height:34px;margin-left:23px;color:#111118"></ui-icon><ui-icon name="dropbox" style="width:38px;height:32px;margin-left:25px"></ui-icon><ui-icon name="cc" fill style="width:41px;height:34px;margin-left:22px"></ui-icon><ui-icon name="boxc" style="width:32px;height:32px;margin-left:18px"></ui-icon><ui-icon name="em" style="width:28px;height:32px;margin-left:20px"></ui-icon><ui-icon name="wifi" style="width:41px;height:30px;margin-left:23px" sw="3"></ui-icon><fit-text w="60" style="margin-left:23px;font-size:24px">100%</fit-text><ui-icon name="battery" style="width:46px;height:28px;margin-left:9px"></ui-icon><fit-text w="149" style="margin-left:41px">Fri 2:05 PM</fit-text><ui-icon name="search" style="width:29px;height:28px;margin-left:46px" sw="2.600"></ui-icon>
<svg width="32" height="32" viewBox="0 0 32 32" style="margin-left:34px;flex:none"><circle cx="16" cy="16" r="15.500" fill="#15133a"/><circle cx="16" cy="16" r="13" fill="#2c2670"/><path d="M4 14c5-9 17-12 22-2-6-3-10 2-22 2z" fill="#b93a9d"/><path d="M5 20c8 8 18 7 22-4-6 6-12 2-22 4z" fill="#2a8fc0"/><path d="M15 5l2 9 8-3-6 6 6 7-8-4-6 7 2-8-7-1 7-3z" fill="#d6f4f2" opacity=".85"/></svg>
<ui-icon name="list" style="width:36px;height:32px;margin-left:24px"></ui-icon>`);

const cell=(svg,dot)=>`<div><svg viewBox="0 0 86 86" width="86" height="86">${svg}</svg>${dot?'<i></i>':''}</div>`;
const adobe=(t,bg,c)=>`<rect x="6.500" y="5" width="73" height="72" fill="${bg}" stroke="${c}" stroke-width="4"/><text x="43" y="55" font-family="Noto Sans CJK SC" font-size="40" text-anchor="middle" fill="${c}">${t}</text>`;
const globe='<circle cx="43" cy="43" r="33" fill="#2f8be3"/><path d="M33 13c14-5 20 2 20 6l-6 8-4 8-7 2 5 7-6-3-7-9c-1-8 1-14 5-19zM46 42l12 4 3 8-9 18-6-1-1-13z" fill="#bfe0f7"/>';
const folder='<path d="M10 22q0-4 4-4h5l2-7h12l3 5h34v58q0 2-3 2H12q-2 0-2-2z" fill="#6bb5dd"/><path d="M9 28h68v44q0 4-4 4H13q-4 0-4-4z" fill="#8bd0f4"/>';
el('mac-dock', `<style>:host{display:flex;position:absolute;z-index:4;left:450px;top:1996px;width:2461px;height:104px;box-sizing:border-box;border-radius:12px 12px 0 0;padding:6px 0 0 5px;overflow:hidden;background:linear-gradient(90deg,#605c64,#6a6672 360px,#b96965 450px,#b96965 530px,#756462 620px,#6c6470 720px,#a0935a 830px,#a0935a 900px,#786a66 1030px,#74666e 1180px,#80706b 1280px,#c07858 1420px,#c07858 1520px,#6b6268 1660px,#8b6f78 1860px,#706b7b 2000px,#7a6976 2130px,#95766a 2200px,#d6c67f 2400px,#cdbf7d)}
div{width:86px;display:flex;flex-direction:column;align-items:center;flex:none}svg{display:block;flex:none;overflow:visible}i{width:7px;height:7px;border-radius:50%;background:#111;flex:none}b{width:2px;height:76px;background:#4b4650;margin:10px 18px 0 20px;flex:none}</style>`
+cell(`<defs><linearGradient id="a" x2="0" y2="1"><stop stop-color="#5fd1f9"/><stop offset="1" stop-color="#2e73e9"/></linearGradient></defs><rect x="10" y="12" width="66" height="63" rx="3" fill="#eef2f7"/><path d="M13 12h34c-5 11-7 22-7 33h8c0 10 0 20 4 30H13q-3 0-3-3V15q0-3 3-3z" fill="url(#a)"/><path d="M28 28v8M60 28v8M23 55c11 12 28 12 39 0" stroke="#16202c" stroke-width="3" fill="none" stroke-linecap="round"/>`,1)
+cell('<circle cx="43" cy="43" r="35" fill="#9aa4aa" stroke="#d4d9dc" stroke-width="2"/><path d="M62 20c-16 3-25 13-30 26l9 9c12-5 20-15 21-35zM32 40l-11 8 9 2zM46 56l-2 12 9-11zM29 55l-9 13 14-8z" fill="#3f474d"/><circle cx="50" cy="34" r="5" fill="#a9b3b9"/>')
+cell('<g transform="rotate(-7 43 43)"><rect x="13" y="12" width="60" height="66" rx="3" fill="#555"/><rect x="11" y="10" width="58" height="64" fill="#fdfdfd"/><path d="M11 10h58v19H11z" fill="#d9493f"/><text x="40" y="25" font-family="Inter" font-size="14" text-anchor="middle" fill="#fff">MAR</text><text x="40" y="64" font-family="Inter" font-size="34" text-anchor="middle" fill="#222">9</text></g>')
+cell('<circle cx="64" cy="62" r="14" fill="none" stroke="#777489" stroke-width="2"/><g transform="rotate(-8 43 43)"><rect x="16" y="9" width="52" height="68" fill="#fff"/><rect x="16" y="9" width="52" height="68" fill="none" stroke="#fff" stroke-width="4" stroke-dasharray="3 2"/><rect x="20" y="13" width="44" height="60" fill="#4a8fdc"/><path d="M28 28c6 3 9 7 11 12l8-18c6 9 7 17 4 26l8 16-11-9-9 8-6-9-8 3 6-9c-5-6-5-12-3-20z" fill="#6d5032"/><path d="M33 60l4-8 4 3-5 8z" fill="#d9a640"/><path d="M46 20l4 5-5 2z" fill="#fff"/></g>')
+cell('<rect x="9" y="11" width="69" height="64" rx="4" fill="#0c0c0c"/><rect x="12" y="13" width="63" height="50" rx="2" fill="#333"/><rect x="9" y="11" width="69" height="64" rx="4" fill="none" stroke="#aaa" stroke-width="2"/><text x="16" y="34" font-family="Liberation Mono" font-size="16" font-weight="700" fill="#fff">&gt;_</text>',1)
+cell('<circle cx="43" cy="43" r="37" fill="#fbc94e"/><path d="M43 43L11 24.500A37 37 0 0 1 75 24.500H43z" fill="#d9493c"/><path d="M43 43L11 24.500A37 37 0 0 0 43 80l16-28z" fill="#3f9d5a"/><circle cx="43" cy="43" r="17" fill="#fff"/><circle cx="43" cy="43" r="13" fill="#4a83ea"/>',1)
+cell('<circle cx="43" cy="43" r="35" fill="#6cbb87" stroke="#e0efe4" stroke-width="2"/><g fill="none" stroke="#eefaf0" stroke-width="2"><ellipse cx="43" cy="43" rx="9" ry="24" transform="rotate(15 43 43)"/><ellipse cx="43" cy="43" rx="9" ry="24" transform="rotate(75 43 43)"/><ellipse cx="43" cy="43" rx="9" ry="24" transform="rotate(-45 43 43)"/></g><circle cx="43" cy="43" r="4" fill="#fff"/>',1)
+cell('<path d="M19 13l24-5 24 5 14 20-38 45L4 33z" fill="#f5a42b"/><path d="M21 33h44L43 78z" fill="#f78f1d"/><path d="M43 8L21 33h44z" fill="#fde08a"/><path d="M4 33l15-20 2 20zM81 33L67 13l-2 20z" fill="#f7b62f"/>',1)
+cell(adobe('Ps','#191a36','#63c8f8'),1)+cell(adobe('Au','#10332c','#64ddb6'))+cell(adobe('Pr','#33103f','#dd8cf9'))
+cell('<circle cx="43" cy="43" r="36" fill="#6c3793" stroke="#fff" stroke-width="2.500"/><path d="M23 20l10 5h20l10-5c2 4 2 8 1 11 7 12 3 24-11 27 3 4 3 9 3 20-9 2-17 2-25 0v-9c-6 1-9-1-12-8 4 0 6 5 12 3l3-6c-14-3-18-15-11-27-1-3-2-7 0-11z" fill="#f6f3f8"/>',1)
+cell('<rect x="9" y="14" width="66" height="42" rx="4" fill="#b4b4b2"/><rect x="12" y="10" width="12" height="6" fill="#ccc"/><rect x="56" y="10" width="14" height="6" fill="#ccc"/><path d="M9 56l66-6 4 8-26 22-38-6 4-14z" fill="#3b3b3b" stroke="#ddd" stroke-width="3"/><path d="M24 64l14 8 12-9 12 4" stroke="#bbb" stroke-width="3" fill="none"/><circle cx="47" cy="35" r="22" fill="#33383d" stroke="#d7d7d7" stroke-width="3"/><circle cx="47" cy="35" r="14" fill="#11151c"/><circle cx="44" cy="30" r="4" fill="#7f95a6"/>')
+cell('<rect x="4" y="4" width="78" height="77" fill="#a81f17" stroke="#a81f17" stroke-width="3" stroke-dasharray="4 2"/><text x="43" y="66" font-family="Liberation Sans" font-weight="700" font-style="italic" font-size="62" letter-spacing="-6" text-anchor="middle" fill="#fff">Fz</text>')
+cell('<rect x="7" y="8" width="72" height="70" fill="#050505"/><path d="M28 29l8 8-8 8-8-8zM43 29l8 8-8 8-8-8zM58 29l8 8-8 8-8-8zM43 45l8 8-8 8-8-8z" fill="#fff"/>',1)
+cell('<defs><linearGradient id="ff" x2="1" y2="1"><stop stop-color="#e8403f"/><stop offset=".6" stop-color="#f97c29"/><stop offset="1" stop-color="#fdd23f"/></linearGradient></defs><circle cx="42" cy="45" r="36" fill="url(#ff)"/><path d="M54 4c-2 12 5 16 14 24s14 22 6 38c4-22-6-30-14-36S50 16 54 4z" fill="#fde34b"/><circle cx="41" cy="38" r="22" fill="#2b4fae"/><path d="M24 34c2-4 8-4 12 0l10 2c4 6-4 8-8 10 0 10 8 12 16 9-6 12-26 11-31-2-2-6-2-13 1-19z" fill="#f98a2a"/>')
+cell('<circle cx="43" cy="43" r="36" fill="#e9edf1"/><circle cx="43" cy="43" r="32" fill="#2c8ee0"/><circle cx="43" cy="43" r="28" fill="none" stroke="#bfe0fa" stroke-width="4" stroke-dasharray="1 3"/><path d="M66 20L48 48l-10-10z" fill="#e8443a"/><path d="M20 66l28-18-10-10z" fill="#f2f4f6"/>',1)
+cell('<g transform="rotate(-8 43 43)"><rect x="10" y="18" width="64" height="56" fill="#3f93e8" stroke="#9ccbf5" stroke-width="2"/><path d="M25 64l18-36 18 36M20 54h40M14 64l50-38" stroke="#86bdf3" stroke-width="3" fill="none"/></g><rect x="56" y="34" width="22" height="42" rx="4" fill="#1b1c20" transform="rotate(10 66 54)"/>')
+cell(adobe('Lr','#182d3b','#b8dcf3'))
+cell('<circle cx="41" cy="42" r="34" fill="#3d96ee"/><path d="M16 60l4 16 12-8z" fill="#3d96ee"/><circle cx="52" cy="58" r="20" fill="#f2f6fb"/><path d="M56 74l10 6-2-12z" fill="#f2f6fb"/><circle cx="44" cy="59" r="3.200" fill="#1f4b80"/><circle cx="53" cy="59" r="3.200" fill="#1f4b80"/><circle cx="62" cy="59" r="3.200" fill="#1f4b80"/><circle cx="66" cy="17" r="14.500" fill="#e2463c"/><text x="66" y="23" font-family="Inter" font-size="16" text-anchor="middle" fill="#fff">12</text>',1)
+cell('<rect x="8" y="9" width="70" height="69" rx="3" fill="#60b53b"/><g transform="translate(20 17) scale(1.600 1.450)"><path d="M10 1c5-1 8 0 10 2 4 0 7 0 7 4 1 6 1 14-1 20-1 8-11 9-12 2 0-5 3-6 6-5v3c-4-1-3 4 0 3 3-1 2-6 2-8-4-1-5 2-9 2C6 25 2 19 1 11h8z" fill="#3b4a38"/><path d="M1 8l7-6v6z" fill="#3b4a38"/></g>',1)
+cell('<g transform="rotate(-6 43 43)"><rect x="13" y="9" width="58" height="69" fill="#fbfaf4"/><path d="M13 9h58v15H13z" fill="#f7cd46"/><path d="M13 32h58M13 39h58M13 46h58M13 53h58M13 60h58M13 67h58" stroke="#d2d0c8" stroke-width="1.500"/></g>',1)
+cell('<rect x="16" y="12" width="60" height="46" fill="#a38a5f" stroke="#eee" stroke-width="2"/><g transform="rotate(-8 43 43)"><rect x="9" y="20" width="60" height="50" fill="#aac4ee" stroke="#fff" stroke-width="3"/><path d="M10 44h58v24H10z" fill="#2c4775"/><path d="M10 58l16-8 16 10 26-4v12H10z" fill="#b9b4a8"/></g><path d="M66 64v8" stroke="#7b6a4f" stroke-width="14" stroke-linecap="round"/><circle cx="66" cy="50" r="14" fill="#b5b9bd" stroke="#3b3a38" stroke-width="4"/>',1)
+'<b></b>'+cell(folder)+cell(globe)+cell(globe)
+cell('<path d="M18 9h52v26H18z" fill="#eee"/><path d="M36 9h26v18H36z" fill="#333"/><path d="M26 12l10 16M54 10l6 16" stroke="#bbb" stroke-width="3"/><path d="M9 24h22l3 4h43v44q0 4-4 4H13q-4 0-4-4z" fill="#8bd0f4"/>')
+cell('<path d="M14 14h58l-7 60q-1 6-8 6H29q-7 0-8-6z" fill="#dcdcdc"/><ellipse cx="43" cy="15" rx="29" ry="9" fill="#a3a5a6" stroke="#eee" stroke-width="3"/><path d="M20 12l12-7 8 8 8-9 12 8 4 6-20 4-18-2z" fill="#e8eaec"/><path d="M32 12l8 6M48 10l-4 8" stroke="#555" stroke-width="3"/><path d="M28 28l4 44M43 28v46M58 28l-4 44" stroke="#cecece" stroke-width="3"/>'));

el('note-terminal', `<style>:host{display:block;position:absolute;left:2900px;top:1930px;width:460px;height:170px;overflow:hidden;border-radius:0 0 10px 0;background:linear-gradient(#5d5a3c 60px,#b5ad71 95px,#f3eb9f 130px,#faf1a5);font:22px "DejaVu Sans Mono","Liberation Mono",monospace;color:#1a1a10;padding:51px 0 0 8px;box-sizing:border-box}fit-text{height:27px;line-height:27px}</style>
<fit-text w="428">enerating: 1 file(s) changed at</fit-text><fit-text w="441" style="margin-top:-1px">9 14:03:26 ...done in 1.26017 se</fit-text>`);

el('red-marks', `<style>:host{display:block;position:absolute;left:0;top:0;z-index:2}svg{display:block}</style>
<svg width="3360" height="2100"><g fill="none" stroke="#ed4125" stroke-width="5"><rect x="450" y="378.500" width="163" height="56"/><rect x="563.500" y="669.500" width="406" height="151"/><rect x="560.500" y="841.500" width="490" height="151"/><rect x="1592" y="1057" width="324" height="82"/><rect x="2295" y="1410" width="229" height="66"/><path d="M591 656L180 487M645 636L537 458"/></g><g fill="#ed4125"><path d="M162 480l18 22 14-27zM529 441l24 16-22 11z"/></g></svg>`);

el('desk-top', `<style>:host{display:block;position:relative;width:3360px;height:2100px;overflow:hidden;background:linear-gradient(90deg,#1a1637 0,#211a3d 60px,#1a1a20 75px,#171a22 130px,#1f1f28 200px,#1c171c 320px,#363f40 330px,#3b433f 355px,#c38751 363px,#c38751 372px,#10151f 384px,#0c0f16 450px,#0c0f16)}
.scroll{position:absolute;left:418px;top:500px;width:120px;height:554px;border-radius:8px;background:#e3e3e3;box-shadow:0 0 0 1px #a9a9a9,0 14px 40px rgba(0,0,0,.3)}.scroll i{display:block;margin-top:184px;width:13px;height:43px;background:#bdbdbd}</style>
<menu-bar></menu-bar><note-terminal></note-terminal><browser-back></browser-back><finder-window></finder-window><home-window></home-window><div class="scroll"><i></i></div><form-window></form-window><vimeo-shot></vimeo-shot><front-window></front-window><red-marks></red-marks><mac-dock></mac-dock>`);
</script>
</body>
</html>
